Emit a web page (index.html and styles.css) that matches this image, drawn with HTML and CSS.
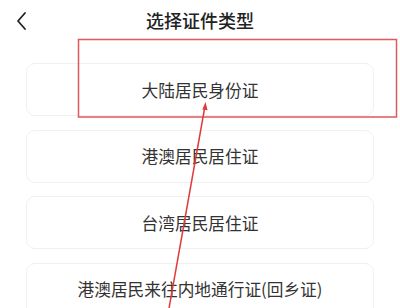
FILE: index.html
```html
<!DOCTYPE html>
<html lang="zh-CN">
<head>
<meta charset="utf-8">
<link rel="stylesheet" href="styles.css">
</head>
<body>
<div class="page">
  <header class="topbar">
    <span class="back">
      <svg width="12" height="20" viewBox="0 0 12 20"><path d="M9 2 L2 10 L9 18" fill="none" stroke="#222" stroke-width="1.8" stroke-linecap="round" stroke-linejoin="round"/></svg>
    </span>
    <h1 class="title">选择证件类型</h1>
    <span class="spacer"></span>
  </header>
  <ul class="list">
    <li class="card">大陆居民身份证</li>
    <li class="card">港澳居民居住证</li>
    <li class="card">台湾居民居住证</li>
    <li class="card">港澳居民来往内地通行证(回乡证)</li>
  </ul>
  <svg class="annot" width="400" height="308" viewBox="0 0 400 308">
    <rect x="78.5" y="39.5" width="318" height="77.5" fill="none" stroke="#e05858" stroke-width="1.5"/>
    <line x1="168" y1="314" x2="205" y2="106" stroke="#e03a3a" stroke-width="1.5"/>
    <path d="M205.5 102 L202.3 109.5 L207.6 110.2 Z" fill="#e03a3a"/>
  </svg>
</div>
</body>
</html>
```

FILE: styles.css
```css
html, body {
  margin: 0;
  padding: 0;
  background: #ffffff;
}
.page {
  position: relative;
  width: 400px;
  height: 308px;
  overflow: hidden;
  font-family: "Noto Sans CJK SC", "Noto Sans", sans-serif;
  color: #333;
}
.topbar {
  height: 40px;
  display: grid;
  grid-template-columns: 40px 1fr 40px;
  align-items: center;
}
.back {
  display: flex;
  align-items: center;
  padding-left: 16px;
  padding-top: 1px;
}
.title {
  margin: 0;
  text-align: center;
  font-size: 18px;
  font-weight: 500;
  color: #222;
  line-height: 1;
}
.list {
  list-style: none;
  margin: 23px 0 0;
  padding: 0 26px;
  display: flex;
  flex-direction: column;
  gap: 13.5px;
}
.card {
  height: 53px;
  box-sizing: border-box;
  border: 1px solid #f1f1f1;
  border-radius: 9px;
  background: #fff;
  display: flex;
  align-items: center;
  justify-content: center;
  font-size: 16.7px;
  color: #333;
}
.annot {
  position: absolute;
  left: 0;
  top: 0;
  pointer-events: none;
}
```
